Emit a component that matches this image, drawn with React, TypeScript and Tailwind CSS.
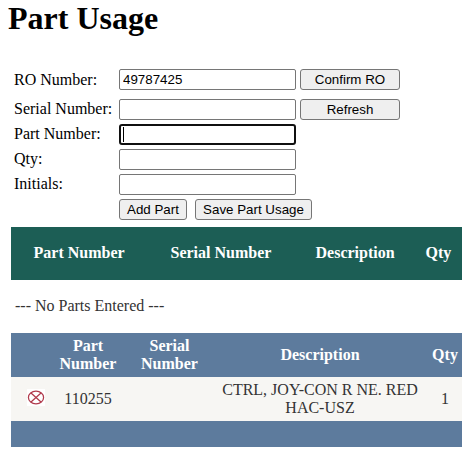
import type { ReactNode } from 'react';

const inputBox =
  "flex h-[21px] w-[177px] items-center rounded-[2px] border border-[#767676] bg-white px-[3px] font-['Liberation_Sans',Arial,sans-serif] text-[13.333px] leading-[15px] text-black outline-none";

function Field({ label, labelClass = 'pb-[2px]', value = '', children }: { label: string; labelClass?: string; value?: string; children?: ReactNode }) {
  return (
    <div className="flex h-[21px] items-center">
      <label className={"w-[105px] leading-[18px] whitespace-nowrap " + labelClass}>{label}</label>
      <input className={inputBox} defaultValue={value} aria-label={label} />
      {children}
    </div>
  );
}

function Button({ children, className }: { children: ReactNode; className: string }) {
  return (
    <button
      className={
        "h-[21px] rounded-[3px] border border-[#767676] bg-[#efefef] text-center font-['Liberation_Sans',Arial,sans-serif] text-[13.333px] leading-[15px] whitespace-nowrap text-black " +
        className
      }
    >
      {children}
    </button>
  );
}

function RemoveIcon() {
  return (
    <svg className="ml-[16px] block h-[17px] w-[18px] bg-white" viewBox="0 0 18 17" fill="none" stroke="#b03a4c" strokeWidth="1.25">
      <ellipse cx="9" cy="8.5" rx="7.6" ry="6.4" />
      <path d="M4 4 L14 13 M14 4 L4 13" />
    </svg>
  );
}

export default function App() {
  return (
    <main className="h-[451px] w-[469px] overflow-hidden bg-white pl-2 font-['Liberation_Serif','Times_New_Roman',serif] text-base text-black">
      <h1 className="h-[69px] text-[32px] leading-[36px] font-bold">Part Usage</h1>

      <form className="flex flex-col pl-[6px]" onSubmit={(e) => e.preventDefault()}>
        <Field label="RO Number:" labelClass="pb-0" value="49787425">
          <Button className="ml-1 w-[100px]">Confirm RO</Button>
        </Field>
        <div className="mt-[9px] flex flex-col gap-1">
          <Field label="Serial Number:">
            <Button className="ml-1 w-[100px]">Refresh</Button>
          </Field>
          <div className="flex h-[21px] items-center">
            <span className="w-[105px] pb-[2px] leading-[18px]">Part Number:</span>
            <div className="flex h-[21px] w-[177px] items-center rounded-[3px] border-2 border-[#101010] pl-[2px]">
              <span className="h-[15px] w-px bg-black" />
            </div>
          </div>
          <Field label="Qty:" />
          <Field label="Initials:" />
          <div className="flex pl-[105px]">
            <Button className="w-[68px]">Add Part</Button>
            <Button className="ml-2 w-[117px]">Save Part Usage</Button>
          </div>
        </div>
      </form>

      <section className="mt-[7px] ml-[3px] w-[451px]">
        <div className="flex h-[53px] items-center bg-[#1c5e55] pb-[2px] pl-[22.5px] leading-[18px] font-bold whitespace-nowrap text-white">
          <span className="w-[137px]">Part Number</span>
          <span className="w-[145px]">Serial Number</span>
          <span className="w-[110px]">Description</span>
          <span>Qty</span>
        </div>
        <p className="flex h-[53px] items-center pb-[2px] pl-1 text-[#333333]">--- No Parts Entered ---</p>
      </section>

      <table className="ml-[3px] w-[451px] table-fixed border-collapse text-center leading-[18px] text-[#333333]">
        <colgroup>
          <col className="w-[36px]" />
          <col className="w-[82px]" />
          <col className="w-[81px]" />
          <col className="w-[220px]" />
          <col className="w-[32px]" />
        </colgroup>
        <thead className="bg-[#5d7b9d] text-white">
          <tr className="h-[44px]">
            <th className="p-0" />
            <th className="p-0">Part<br />Number</th>
            <th className="p-0">Serial<br />Number</th>
            <th className="p-0">Description</th>
            <th className="p-0 pr-[2px]">Qty</th>
          </tr>
        </thead>
        <tbody>
          <tr className="h-[44px] bg-[#f7f6f3]">
            <td className="p-0 pb-1"><RemoveIcon /></td>
            <td className="p-0">110255</td>
            <td className="p-0" />
            <td className="p-0 whitespace-nowrap">CTRL, JOY-CON R NE. RED<br />HAC-USZ</td>
            <td className="p-0 pr-[2px]">1</td>
          </tr>
          <tr className="h-[26px] bg-[#5d7b9d]">
            <td className="p-0" colSpan={5} />
          </tr>
        </tbody>
      </table>
    </main>
  );
}
